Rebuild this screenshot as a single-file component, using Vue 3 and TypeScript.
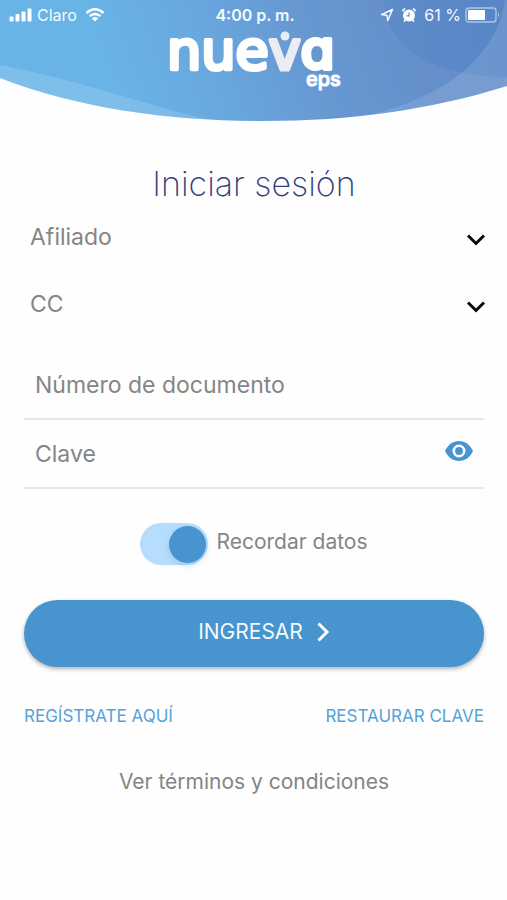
<script setup lang="ts">
import { ref } from 'vue'

const userTypes: string[] = ['Afiliado', 'Empleador', 'IPS']
const documentTypes: string[] = ['CC', 'CE', 'TI', 'PA']

const userType = ref<string>('Afiliado')
const documentType = ref<string>('CC')
const documentNumber = ref<string>('')
const password = ref<string>('')
const showPassword = ref<boolean>(false)
const remember = ref<boolean>(true)
</script>

<template>
  <div class="screen">
    <header class="hero">
      <svg class="hero-art" viewBox="0 0 507 122" preserveAspectRatio="none" aria-hidden="true">
        <defs>
          <linearGradient id="sky" gradientUnits="userSpaceOnUse" x1="120" y1="100" x2="400" y2="0">
            <stop offset="0" stop-color="#69b4e7" />
            <stop offset="0.3" stop-color="#68a9df" />
            <stop offset="0.65" stop-color="#6798d2" />
            <stop offset="1" stop-color="#648fcb" />
          </linearGradient>
          <linearGradient id="dusk" x1="0" y1="0" x2="1" y2="0">
            <stop offset="0" stop-color="#5082c5" stop-opacity="0.3" />
            <stop offset="1" stop-color="#4a7cc2" stop-opacity="0.5" />
          </linearGradient>
          <clipPath id="wave">
            <path d="M0 0H507V86C430 110 350 121 265 121C170 121 80 109 0 78Z" />
          </clipPath>
        </defs>
        <g clip-path="url(#wave)">
          <rect width="507" height="122" fill="url(#sky)" />
          <path d="M0 65C70 78 140 103 205 119L205 122H0Z" fill="#fff" fill-opacity="0.14" />
          <path d="M384 0C384 44 430 77 507 77V0Z" fill="url(#dusk)" />
          <path d="M505 0C496 62 436 101 360 117L400 122H507V0Z" fill="#fff" fill-opacity="0.12" />
        </g>
      </svg>

      <div class="status">
        <div class="status-side">
          <svg class="signal" viewBox="0 0 24 14" aria-hidden="true">
            <rect x="0.500" y="8.500" width="4" height="5" rx="1" />
            <rect x="6.500" y="6" width="4" height="7.500" rx="1" />
            <rect x="12.500" y="3.500" width="4" height="10" rx="1" />
            <rect x="18.500" y="0.500" width="4" height="13" rx="1" />
          </svg>
          <span>Claro</span>
          <svg class="wifi" viewBox="0 0 20 14" aria-hidden="true">
            <path d="M1.500 5Q10 -2.500 18.500 5" />
            <path d="M4.600 8.200Q10 3.600 15.400 8.200" />
            <path class="solid" d="M10 13.600L6.800 10.400Q10 7.600 13.200 10.400Z" />
          </svg>
        </div>
        <span class="time">4:00 p. m.</span>
        <div class="status-side status-end">
          <svg class="arrow" viewBox="0 0 14 14" aria-hidden="true">
            <path d="M12.500 1.500L1.500 6.600L7 7.200L7.800 12.600Z" />
          </svg>
          <svg class="alarm" viewBox="0 0 16 16" aria-hidden="true">
            <circle class="bell" cx="8" cy="8.600" r="6" />
            <path class="ears" d="M1.600 4.400Q2 2.200 4.200 1.800M14.400 4.400Q14 2.200 11.800 1.800M4.400 13L3 14.600M11.600 13L13 14.600" />
            <path class="hands" d="M8 5.400V8.800H5.600" />
          </svg>
          <span>61 %</span>
          <svg class="battery" viewBox="0 0 36 16" aria-hidden="true">
            <rect class="case" x="1" y="1" width="30" height="14" rx="3" />
            <rect class="charge" x="3" y="3" width="17" height="10" rx="1" />
            <path class="cap" d="M33 5.500Q35.500 8 33 10.500Z" />
          </svg>
        </div>
      </div>

      <svg class="logo" viewBox="0 0 180 64" role="img" aria-label="nueva eps">
        <text class="word" x="3" y="39" font-size="54">nue<tspan class="soft">v</tspan><tspan class="round">a</tspan></text>
        <circle class="dot" cx="121" cy="6" r="4.500" />
        <text class="sub" x="142" y="56" font-size="20">eps</text>
      </svg>
    </header>

    <main class="content">
      <h1>Iniciar sesión</h1>

      <form @submit.prevent>
        <div class="picker">
          <select v-model="userType" aria-label="Tipo de usuario">
            <option v-for="item in userTypes" :key="item">{{ item }}</option>
          </select>
          <svg class="chevron" viewBox="0 0 20 14" aria-hidden="true"><path d="M2 2.500L10 10.500L18 2.500" /></svg>
        </div>
        <div class="picker">
          <select v-model="documentType" aria-label="Tipo de documento">
            <option v-for="item in documentTypes" :key="item">{{ item }}</option>
          </select>
          <svg class="chevron" viewBox="0 0 20 14" aria-hidden="true"><path d="M2 2.500L10 10.500L18 2.500" /></svg>
        </div>

        <div class="field">
          <input v-model="documentNumber" type="text" placeholder="Número de documento" aria-label="Número de documento" />
        </div>
        <div class="field">
          <input v-model="password" :type="showPassword ? 'text' : 'password'" placeholder="Clave" aria-label="Clave" />
          <button class="reveal" type="button" aria-label="Mostrar clave" @click="showPassword = !showPassword">
            <svg viewBox="0 0 28 20" aria-hidden="true">
              <path d="M0 10C3 3.500 8 0 14 0S25 3.500 28 10C25 16.500 20 20 14 20S3 16.500 0 10Z" />
              <circle class="ring" cx="14" cy="10" r="5.200" />
            </svg>
          </button>
        </div>

        <label class="remember">
          <input v-model="remember" type="checkbox" role="switch" />
          <span>Recordar datos</span>
        </label>

        <button class="submit" type="submit">
          <span>INGRESAR</span>
          <svg viewBox="0 0 14 20" aria-hidden="true"><path d="M2.500 1.500L11 10L2.500 18.500" /></svg>
        </button>
      </form>

      <nav class="links">
        <a href="#registro">REGÍSTRATE AQUÍ</a>
        <a href="#restaurar">RESTAURAR CLAVE</a>
      </nav>
      <a class="terms" href="#terminos">Ver términos y condiciones</a>
    </main>
  </div>
</template>

<style>
body {
  margin: 0;
  background: #fefefe;
}
</style>

<style scoped>
.screen {
  min-height: 100vh;
  background: #fefefe;
  color: #858585;
  font-family: Inter, "Liberation Sans", sans-serif;
  font-size: 21px;
}

.hero {
  position: relative;
  display: flex;
  flex-direction: column;
  align-items: center;
  height: 122px;
}

.hero-art {
  position: absolute;
  inset: 0;
  width: 100%;
  height: 100%;
}

.status {
  position: relative;
  display: grid;
  grid-template-columns: 1fr auto 1fr;
  align-items: center;
  box-sizing: border-box;
  width: 100%;
  height: 30px;
  padding: 0 6px 0 9px;
  color: #f4faff;
  font-size: 16px;
  line-height: 20px;
}

.status-side {
  display: flex;
  align-items: center;
  gap: 4px;
}

.status-end {
  justify-content: flex-end;
}

.time {
  font-weight: 600;
}

.signal {
  width: 24px;
  height: 14px;
  fill: #fff;
}

.wifi {
  width: 20px;
  height: 14px;
  margin-left: 4px;
  fill: none;
  stroke: #fff;
  stroke-width: 2.4;
}

.wifi .solid {
  fill: #fff;
  stroke: none;
}

.arrow {
  width: 14px;
  height: 14px;
  fill: none;
  stroke: #fff;
  stroke-width: 1.4;
  stroke-linejoin: round;
}

.alarm {
  width: 16px;
  height: 16px;
  margin: 0 3px;
  fill: none;
  stroke: #fff;
  stroke-width: 1.6;
}

.alarm .bell {
  fill: #fff;
  stroke: none;
}

.alarm .hands {
  stroke: #5b8bc9;
  stroke-width: 1.2;
}

.battery {
  width: 36px;
  height: 16px;
}

.battery .case {
  fill: none;
  stroke: #a9c6e8;
  stroke-width: 1.4;
}

.battery .charge {
  fill: #fff;
}

.battery .cap {
  fill: #a9c6e8;
}

.logo {
  position: relative;
  width: 180px;
  height: 64px;
  overflow: visible;
}

.logo text {
  fill: #fff;
  stroke: #fff;
  stroke-linejoin: round;
  font-feature-settings: "cv11";
}

.logo .word {
  font-family: "DejaVu Sans", sans-serif;
  stroke-width: 4px;
}

.logo .round {
  font-family: Inter, sans-serif;
  font-weight: 500;
}

.logo .sub {
  font-weight: 500;
  stroke-width: 1px;
}

.logo .soft {
  fill: #ececf5;
  stroke: #ececf5;
}

.logo .dot {
  fill: #ececf5;
}

.content {
  display: flex;
  flex-direction: column;
  padding: 42px 23px 24px 24px;
}

h1 {
  margin: 0 0 13px;
  color: #34407c;
  font-size: 34px;
  font-weight: 200;
  line-height: 40px;
  text-align: center;
}

form {
  display: flex;
  flex-direction: column;
}

select,
input,
button {
  margin: 0;
  border: 0;
  background: none;
  color: inherit;
  font: inherit;
}

.picker {
  position: relative;
  height: 40px;
  margin-bottom: 27px;
}

.picker select {
  width: 100%;
  height: 100%;
  padding: 0 40px 0 6px;
  font-size: 23px;
  appearance: none;
}

.chevron {
  position: absolute;
  top: 16px;
  right: -2px;
  width: 20px;
  height: 14px;
  fill: none;
  stroke: #0a0a0a;
  stroke-width: 3;
  pointer-events: none;
}

.field {
  display: flex;
  align-items: center;
  box-sizing: border-box;
  height: 69px;
  padding: 0 11px;
  border-bottom: 2px solid #e6e6e6;
}

.field input {
  flex: 1;
  min-width: 0;
  padding: 0;
  font-size: 23px;
  outline: none;
}

.field input::placeholder {
  color: #858585;
  opacity: 1;
}

.reveal {
  display: flex;
  padding: 0 0 6px;
}

.reveal svg {
  width: 28px;
  height: 20px;
  fill: #4794ce;
}

.reveal .ring {
  fill: none;
  stroke: #fff;
  stroke-width: 2.6;
}

.remember {
  display: flex;
  align-items: center;
  align-self: center;
  gap: 8px;
  margin: 34px 0 35px;
}

.remember span {
  padding-bottom: 6px;
}

.remember input {
  display: flex;
  align-items: center;
  box-sizing: border-box;
  width: 68px;
  height: 42px;
  padding: 0 2px;
  border-radius: 21px;
  background: #dddddd;
  appearance: none;
}

.remember input::before {
  content: "";
  width: 37px;
  height: 37px;
  border-radius: 50%;
  background: #ffffff;
  box-shadow: 0 2px 6px rgba(71, 148, 206, 0.3);
}

.remember input:checked {
  justify-content: flex-end;
  background: #b6ddfd;
}

.remember input:checked::before {
  background: #4794ce;
}

.submit {
  display: flex;
  align-items: center;
  justify-content: center;
  gap: 13px;
  height: 67px;
  padding: 0 0 4px 20px;
  border-radius: 34px;
  background: #4794ce;
  box-shadow: 0 2px 4px rgba(0, 0, 0, 0.3);
  color: #f2f9ff;
}

.submit svg {
  width: 14px;
  height: 20px;
  fill: none;
  stroke: #fff;
  stroke-width: 3;
}

a {
  text-decoration: none;
}

.links {
  display: flex;
  justify-content: space-between;
  margin-top: 37px;
  color: #55a3da;
  font-size: 17px;
  line-height: 24px;
}

.links a {
  color: inherit;
}

.terms {
  align-self: center;
  margin-top: 39px;
  color: inherit;
  line-height: 30px;
}
</style>
